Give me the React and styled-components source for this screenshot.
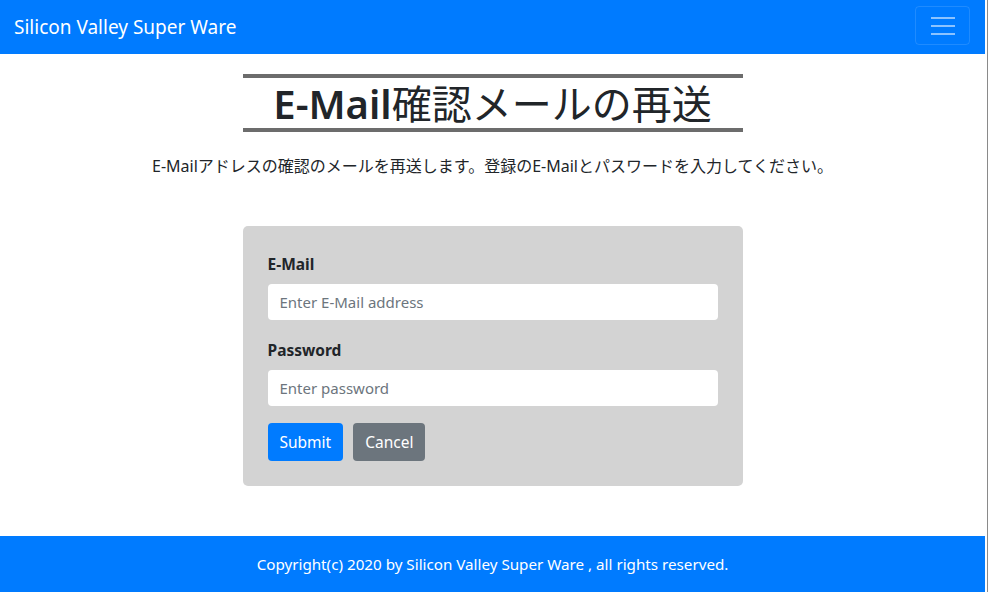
import React from 'react'
import styled, { createGlobalStyle } from 'styled-components'

const GlobalStyle = createGlobalStyle`
    html, body {
        margin: 0;
        padding: 0;
        background: #fff;
    }
    body {
        font-family: "Noto Sans", "Noto Sans CJK JP", sans-serif;
        color: #212529;
    }
    * {
        box-sizing: border-box;
    }
`

const App = () => {
    return (
        <Page>
            <GlobalStyle />
            <NavBar>
                <Brand>Silicon Valley Super Ware</Brand>
                <Toggler aria-label="menu">
                    <span />
                    <span />
                    <span />
                </Toggler>
            </NavBar>
            <Main>
                <Title>
                    <Latin>E-Mail</Latin>確認メールの再送
                </Title>
                <Lead>E-Mailアドレスの確認のメールを再送します。登録のE-Mailとパスワードを入力してください。</Lead>
                <Card>
                    <Field>
                        <Label>E-Mail</Label>
                        <Input type="email" placeholder="Enter E-Mail address" />
                    </Field>
                    <Field>
                        <Label>Password</Label>
                        <Input type="password" placeholder="Enter password" />
                    </Field>
                    <Buttons>
                        <Button>Submit</Button>
                        <Button secondary>Cancel</Button>
                    </Buttons>
                </Card>
            </Main>
            <Footer>Copyright(c) 2020 by Silicon Valley Super Ware , all rights reserved.</Footer>
        </Page>
    )
}

export default App

const Page = styled.div`
    width: 988px;
    height: 592px;
    display: flex;
    flex-direction: column;
    border-right: 1px solid #8a8a8a;
    padding-right: 2px;
    overflow: hidden;
`

const NavBar = styled.nav`
    height: 54px;
    flex-shrink: 0;
    background: #007bff;
    display: flex;
    align-items: center;
    justify-content: space-between;
    padding: 0 15px 0 14px;
`

const Brand = styled.div`
    color: #fff;
    font-size: 19px;
`

const Toggler = styled.button`
    width: 55px;
    height: 39px;
    margin-top: -3px;
    border: 1px solid rgba(255, 255, 255, 0.12);
    border-radius: 4px;
    background: transparent;
    display: flex;
    flex-direction: column;
    align-items: center;
    justify-content: center;
    gap: 6px;
    span {
        display: block;
        width: 24px;
        height: 2px;
        background: rgba(255, 255, 255, 0.55);
    }
`

const Main = styled.main`
    flex: 1;
    display: flex;
    flex-direction: column;
    align-items: center;
    padding-top: 20px;
`

const Title = styled.h1`
    width: 500px;
    margin: 0;
    border-top: 4px solid #6c6c6c;
    border-bottom: 4px solid #6c6c6c;
    text-align: center;
    font-size: 40px;
    font-weight: 400;
    line-height: 49px;
    color: #212529;
    font-family: "Noto Sans CJK JP", "Noto Sans", sans-serif;
`

const Latin = styled.span`
    font-family: "Noto Sans", sans-serif;
    font-weight: 600;
`

const Lead = styled.p`
    margin: 23px 0 0;
    font-size: 16px;
    line-height: 22px;
    white-space: nowrap;
`

const Card = styled.div`
    width: 500px;
    margin-top: 49px;
    background: #d3d3d3;
    border-radius: 5px;
    padding: 28px 25px 25px;
    display: flex;
    flex-direction: column;
    gap: 20px;
`

const Field = styled.div`
    display: flex;
    flex-direction: column;
    gap: 10px;
`

const Label = styled.label`
    font-size: 15.5px;
    font-weight: 700;
    line-height: 20px;
`

const Input = styled.input`
    height: 36px;
    border: none;
    border-radius: 4px;
    background: #fff;
    padding: 0 12px;
    font-family: "Noto Sans", sans-serif;
    font-size: 15px;
    &::placeholder {
        color: #6c757d;
    }
`

const Buttons = styled.div`
    display: flex;
    gap: 10px;
    margin-top: -3px;
`

const Button = styled.button`
    height: 38px;
    padding: 0 12px;
    border: none;
    border-radius: 4px;
    background: ${p => (p.secondary ? '#6c757d' : '#007bff')};
    color: #fff;
    font-family: "Noto Sans", sans-serif;
    font-size: 15.5px;
`

const Footer = styled.footer`
    height: 56px;
    flex-shrink: 0;
    background: #007bff;
    color: #fff;
    display: flex;
    align-items: center;
    justify-content: center;
    font-size: 15.2px;
`
